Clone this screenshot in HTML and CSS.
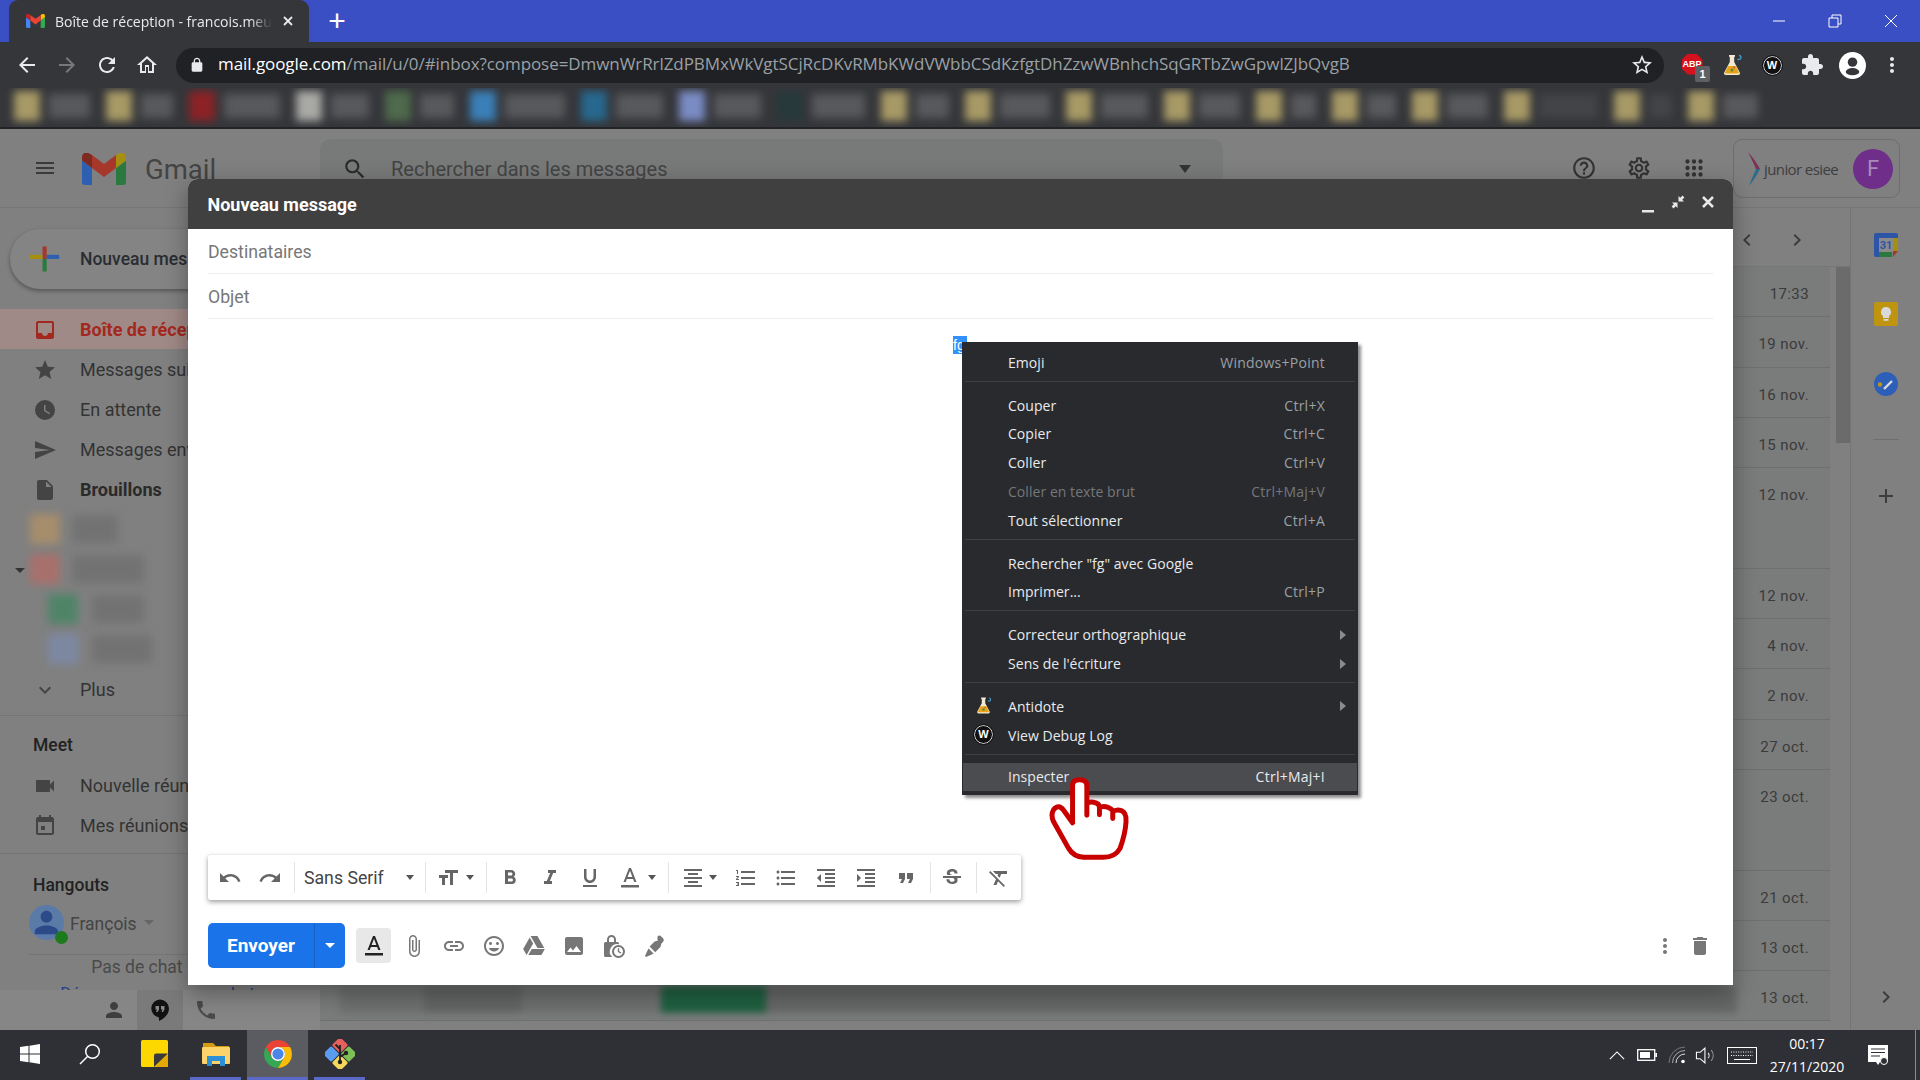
FILE: index.html
```html
<!DOCTYPE html>
<html lang="fr">
<head>
    <meta charset="UTF-8">
    <title>Boîte de réception - Gmail</title>
    <link rel="stylesheet" href="styles.css">
</head>
<body>
    <svg class="sprite" xmlns="http://www.w3.org/2000/svg">
        <symbol id="i-inbox" viewBox="0 0 24 24"><path d="M19 3H5c-1.1 0-2 .9-2 2v14c0 1.1.9 2 2 2h14c1.1 0 2-.9 2-2V5c0-1.1-.9-2-2-2zm0 12h-4c0 1.66-1.35 3-3 3s-3-1.34-3-3H5V5h14v10z"/></symbol>
        <symbol id="i-star" viewBox="0 0 24 24"><path d="M12 17.27L18.18 21l-1.64-7.03L22 9.24l-7.19-.61L12 2 9.19 8.63 2 9.24l5.46 4.73L5.82 21z"/></symbol>
        <symbol id="i-clock" viewBox="0 0 24 24"><path d="M12 2a10 10 0 1 0 0 20 10 10 0 0 0 0-20zm4.2 14.2L11 13V7h1.5v5.2l4.5 2.7z"/></symbol>
        <symbol id="i-send" viewBox="0 0 24 24"><path d="M2.01 21L23 12 2.01 3 2 10l15 2-15 2z"/></symbol>
        <symbol id="i-draft" viewBox="0 0 24 24"><path d="M6 2c-1.1 0-1.99.9-1.99 2L4 20c0 1.1.89 2 1.99 2H18c1.1 0 2-.9 2-2V8l-6-6H6zm7 7V3.5L18.5 9H13z"/></symbol>
        <symbol id="i-video" viewBox="0 0 24 24"><path d="M17 10.5V7c0-.55-.45-1-1-1H4c-.55 0-1 .45-1 1v10c0 .55.45 1 1 1h12c.55 0 1-.45 1-1v-3.5l4 4v-11l-4 4z"/></symbol>
        <symbol id="i-event" viewBox="0 0 24 24"><path d="M12 12H8v4h4v-4zM16 1v2H8V1H6v2H5c-1.11 0-1.99.9-1.99 2L3 19c0 1.1.89 2 2 2h14c1.1 0 2-.9 2-2V5c0-1.1-.9-2-2-2h-1V1h-2zm3 18H5V8h14v11z"/></symbol>
        <symbol id="i-search" viewBox="0 0 24 24"><path d="M15.5 14h-.79l-.28-.27C15.41 12.59 16 11.11 16 9.5 16 5.91 13.09 3 9.5 3S3 5.91 3 9.5 5.91 16 9.5 16c1.61 0 3.09-.59 4.23-1.57l.27.28v.79l5 4.99L20.49 19l-4.99-5zm-6 0C7.01 14 5 11.99 5 9.5S7.01 5 9.5 5 14 7.01 14 9.5 11.99 14 9.5 14z"/></symbol>
        <symbol id="i-help" viewBox="0 0 24 24"><path d="M11 18h2v-2h-2v2zm1-16C6.48 2 2 6.48 2 12s4.48 10 10 10 10-4.48 10-10S17.52 2 12 2zm0 18c-4.41 0-8-3.59-8-8s3.59-8 8-8 8 3.59 8 8-3.59 8-8 8zm0-14c-2.21 0-4 1.79-4 4h2c0-1.1.9-2 2-2s2 .9 2 2c0 2-3 1.75-3 5h2c0-2.25 3-2.5 3-5 0-2.21-1.79-4-4-4z"/></symbol>
        <symbol id="i-gear" viewBox="0 0 24 24"><path d="M19.43 12.98c.04-.32.07-.64.07-.98 0-.34-.03-.66-.07-.98l2.11-1.65c.19-.15.24-.42.12-.64l-2-3.46c-.09-.16-.26-.25-.44-.25-.06 0-.12.01-.17.03l-2.49 1c-.52-.4-1.08-.73-1.69-.98l-.38-2.65C14.46 2.18 14.25 2 14 2h-4c-.25 0-.46.18-.49.42l-.38 2.65c-.61.25-1.17.59-1.69.98l-2.49-1c-.06-.02-.12-.03-.18-.03-.17 0-.34.09-.43.25l-2 3.46c-.13.22-.07.49.12.64l2.11 1.65c-.04.32-.07.65-.07.98 0 .33.03.66.07.98l-2.11 1.65c-.19.15-.24.42-.12.64l2 3.46c.09.16.26.25.44.25.06 0 .12-.01.17-.03l2.49-1c.52.4 1.08.73 1.69.98l.38 2.65c.03.24.24.42.49.42h4c.25 0 .46-.18.49-.42l.38-2.65c.61-.25 1.17-.59 1.69-.98l2.49 1c.06.02.12.03.18.03.17 0 .34-.09.43-.25l2-3.46c.12-.22.07-.49-.12-.64l-2.11-1.65zm-1.98-1.71c.04.31.05.52.05.73 0 .21-.02.43-.05.73l-.14 1.13.89.7 1.08.84-.7 1.21-1.27-.51-1.04-.42-.9.68c-.43.32-.84.56-1.25.73l-1.06.43-.16 1.13-.2 1.35h-1.4l-.19-1.35-.16-1.13-1.06-.43c-.43-.18-.83-.41-1.23-.71l-.91-.7-1.06.43-1.27.51-.7-1.21 1.08-.84.89-.7-.14-1.13c-.03-.31-.05-.54-.05-.74s.02-.43.05-.73l.14-1.13-.89-.7-1.08-.84.7-1.21 1.27.51 1.04.42.9-.68c.43-.32.84-.56 1.25-.73l1.06-.43.16-1.13.2-1.35h1.39l.19 1.35.16 1.13 1.06.43c.43.18.83.41 1.23.71l.91.7 1.06-.43 1.27-.51.7 1.21-1.07.85-.89.7.14 1.13zM12 8c-2.21 0-4 1.79-4 4s1.79 4 4 4 4-1.79 4-4-1.79-4-4-4zm0 6c-1.1 0-2-.9-2-2s.9-2 2-2 2 .9 2 2-.9 2-2 2z"/></symbol>
        <symbol id="i-grid" viewBox="0 0 24 24"><path d="M6 8a2 2 0 1 0 0-4 2 2 0 0 0 0 4zm6 12a2 2 0 1 0 0-4 2 2 0 0 0 0 4zm-6 0a2 2 0 1 0 0-4 2 2 0 0 0 0 4zm0-6a2 2 0 1 0 0-4 2 2 0 0 0 0 4zm6 0a2 2 0 1 0 0-4 2 2 0 0 0 0 4zm4-8a2 2 0 1 0 4 0 2 2 0 0 0-4 0zm-4 2a2 2 0 1 0 0-4 2 2 0 0 0 0 4zm6 6a2 2 0 1 0 0-4 2 2 0 0 0 0 4zm0 6a2 2 0 1 0 0-4 2 2 0 0 0 0 4z"/></symbol>
        <symbol id="i-undo" viewBox="0 0 24 24"><path d="M12.5 8c-2.65 0-5.05.99-6.9 2.6L2 7v9h9l-3.62-3.62c1.39-1.16 3.16-1.88 5.12-1.88 3.54 0 6.55 2.31 7.6 5.5l2.37-.78C21.08 11.03 17.15 8 12.5 8z"/></symbol>
        <symbol id="i-redo" viewBox="0 0 24 24"><path d="M18.4 10.6C16.55 8.99 14.15 8 11.5 8c-4.65 0-8.58 3.03-9.96 7.22L3.9 16c1.05-3.19 4.05-5.5 7.6-5.5 1.95 0 3.73.72 5.12 1.88L13 16h9V7l-3.6 3.6z"/></symbol>
        <symbol id="i-size" viewBox="0 0 24 24"><path d="M9 4v3h5v12h3V7h5V4H9zm-6 8h3v7h3v-7h3V9H3v3z"/></symbol>
        <symbol id="i-bold" viewBox="0 0 24 24"><path d="M15.6 10.79c.97-.67 1.65-1.77 1.65-2.79 0-2.26-1.75-4-4-4H7v14h7.04c2.09 0 3.71-1.7 3.71-3.79 0-1.52-.86-2.82-2.15-3.42zM10 6.5h3c.83 0 1.5.67 1.5 1.5s-.67 1.5-1.5 1.5h-3v-3zm3.5 9H10v-3h3.5c.83 0 1.5.67 1.5 1.5s-.67 1.5-1.5 1.5z"/></symbol>
        <symbol id="i-italic" viewBox="0 0 24 24"><path d="M10 4v3h2.21l-3.42 8H6v3h8v-3h-2.21l3.42-8H18V4z"/></symbol>
        <symbol id="i-underline" viewBox="0 0 24 24"><path d="M12 17c3.31 0 6-2.69 6-6V3h-2.5v8c0 1.93-1.57 3.5-3.5 3.5S8.5 12.93 8.5 11V3H6v8c0 3.31 2.69 6 6 6zm-7 2v2h14v-2H5z"/></symbol>
        <symbol id="i-color" viewBox="0 0 24 24"><path d="M11 2L5.5 16h2.25l1.12-3h6.25l1.12 3h2.25L13 2h-2zm-1.38 9L12 4.67 14.38 11H9.62zM3 19h18v2.5H3z"/></symbol>
        <symbol id="i-align" viewBox="0 0 24 24"><path d="M7 15v2h10v-2H7zm-4 6h18v-2H3v2zm0-8h18v-2H3v2zm4-6v2h10V7H7zM3 3v2h18V3H3z"/></symbol>
        <symbol id="i-numbers" viewBox="0 0 24 24"><path d="M2 17h2v.5H3v1h1v.5H2v1h3v-4H2v1zm1-9h1V4H2v1h1v3zm-1 3h1.8L2 13.1v.9h3v-1H3.2L5 10.9V10H2v1zm5-6v2h14V5H7zm0 14h14v-2H7v2zm0-6h14v-2H7v2z"/></symbol>
        <symbol id="i-bullets" viewBox="0 0 24 24"><path d="M4 10.5c-.83 0-1.5.67-1.5 1.5s.67 1.5 1.5 1.5 1.5-.67 1.5-1.5-.67-1.5-1.5-1.5zm0-6c-.83 0-1.5.67-1.5 1.5S3.17 7.5 4 7.5 5.5 6.83 5.5 6 4.83 4.5 4 4.5zm0 12c-.83 0-1.5.68-1.5 1.5s.68 1.5 1.5 1.5 1.5-.68 1.5-1.5-.67-1.5-1.5-1.5zM7 19h14v-2H7v2zm0-6h14v-2H7v2zm0-8v2h14V5H7z"/></symbol>
        <symbol id="i-outdent" viewBox="0 0 24 24"><path d="M11 17h10v-2H11v2zm-8-5l4 4V8l-4 4zm0 9h18v-2H3v2zM3 3v2h18V3H3zm8 6h10V7H11v2zm0 4h10v-2H11v2z"/></symbol>
        <symbol id="i-indent" viewBox="0 0 24 24"><path d="M3 21h18v-2H3v2zM3 8v8l4-4-4-4zm8 9h10v-2H11v2zM3 3v2h18V3H3zm8 6h10V7H11v2zm0 4h10v-2H11v2z"/></symbol>
        <symbol id="i-quote" viewBox="0 0 24 24"><path d="M6 17h3l2-4V7H5v6h3zm8 0h3l2-4V7h-6v6h3z"/></symbol>
        <symbol id="i-strike" viewBox="0 0 24 24"><path d="M6.85 7.08C6.85 4.37 9.45 3 12.24 3c1.64 0 3 .49 3.9 1.28.77.65 1.46 1.73 1.46 3.24h-3.01c0-.31-.05-.59-.15-.85-.29-.86-1.2-1.28-2.25-1.28-1.86 0-2.34 1.02-2.34 1.7 0 .48.25.88.74 1.21.38.25.77.48 1.41.7H7.39c-.21-.34-.54-.89-.54-1.92zM21 12v-2H3v2h9.62c1.15.45 1.96.75 1.96 1.97 0 1-.81 1.67-2.28 1.67-1.54 0-2.93-.54-2.93-2.51H6.4c0 .55.08 1.13.24 1.58.81 2.29 3.29 3.3 5.67 3.3 2.27 0 5.3-.89 5.3-4.05 0-.3-.01-1.16-.48-1.94H21V12z"/></symbol>
        <symbol id="i-clear" viewBox="0 0 24 24"><path d="M3.27 5L2 6.27l6.97 6.97L6.5 19h3l1.57-3.66L16.73 21 18 19.73 3.55 5.27 3.27 5zM6 5v.18L8.82 8h2.4l-.72 1.68 2.1 2.1L14.21 8H20V5H6z"/></symbol>
        <symbol id="i-attach" viewBox="0 0 24 24"><path d="M16.5 6v11.5c0 2.21-1.79 4-4 4s-4-1.79-4-4V5c0-1.38 1.12-2.5 2.5-2.5s2.5 1.12 2.5 2.5v10.5c0 .55-.45 1-1 1s-1-.45-1-1V6H10v9.5c0 1.38 1.12 2.5 2.5 2.5s2.5-1.12 2.5-2.5V5c0-2.21-1.79-4-4-4S7 2.79 7 5v12.5c0 3.04 2.46 5.5 5.5 5.5s5.5-2.46 5.5-5.5V6h-1.5z"/></symbol>
        <symbol id="i-link" viewBox="0 0 24 24"><path d="M3.9 12c0-1.71 1.39-3.1 3.1-3.1h4V7H7c-2.76 0-5 2.24-5 5s2.24 5 5 5h4v-1.9H7c-1.71 0-3.1-1.39-3.1-3.1zM8 13h8v-2H8v2zm9-6h-4v1.9h4c1.71 0 3.1 1.39 3.1 3.1s-1.39 3.1-3.1 3.1h-4V17h4c2.76 0 5-2.24 5-5s-2.24-5-5-5z"/></symbol>
        <symbol id="i-emoji" viewBox="0 0 24 24"><path d="M11.99 2C6.47 2 2 6.48 2 12s4.47 10 9.99 10C17.52 22 22 17.52 22 12S17.52 2 11.99 2zM12 20c-4.42 0-8-3.58-8-8s3.58-8 8-8 8 3.58 8 8-3.58 8-8 8zm3.5-9c.83 0 1.5-.67 1.5-1.5S16.33 8 15.5 8 14 8.67 14 9.5s.67 1.5 1.5 1.5zm-7 0c.83 0 1.5-.67 1.5-1.5S9.33 8 8.5 8 7 8.67 7 9.5 7.67 11 8.5 11zm3.5 6.5c2.33 0 4.31-1.46 5.11-3.5H6.89c.8 2.04 2.78 3.5 5.11 3.5z"/></symbol>
        <symbol id="i-drive" viewBox="0 0 24 24"><path d="M7.71 3.5L1.15 15l3.43 6 6.55-11.5zM9.73 15L6.3 21h13.12l3.43-6zM22.28 14L15.42 2H8.58v.01L15.43 14z"/></symbol>
        <symbol id="i-photo" viewBox="0 0 24 24"><path d="M21 19V5c0-1.1-.9-2-2-2H5c-1.1 0-2 .9-2 2v14c0 1.1.9 2 2 2h14c1.1 0 2-.9 2-2zM8.5 13.5l2.5 3.01L14.5 12l4.5 6H5l3.5-4.5z"/></symbol>
        <symbol id="i-confidential" viewBox="0 0 24 24"><path d="M3.5 8H5V5.500a4.500 4.500 0 0 1 9 0V8h1.500A1.500 1.500 0 0 1 17 9.500v.7a7.500 7.500 0 0 0-6.800 12.800H3.500A1.500 1.500 0 0 1 2 21.500v-12A1.500 1.500 0 0 1 3.500 8zM7 8h5V5.500a2.500 2.500 0 0 0-5 0V8zm9.500 3a6.500 6.500 0 1 1 0 13 6.500 6.500 0 0 1 0-13zm0 2a4.500 4.500 0 1 0 0 9 4.500 4.500 0 0 0 0-9zm-.7 1.200h1.400v3l2.200 1.300-.7 1.100-2.900-1.700v-3.700z"/></symbol>
        <symbol id="i-pen" viewBox="0 0 24 24"><path d="M15.5 2.500a2.600 2.600 0 0 1 3.700 0l1.800 1.800a2.600 2.600 0 0 1 0 3.700l-1.600 1.600-1 3.400-5.200 5.200-5.600-5.600 5-5 3.400-1-.5-.5zM6.600 14.600l5 5-3 1.400-4.600 2-1-1 2-4.600z"/></symbol>
        <symbol id="i-trash" viewBox="0 0 24 24"><path d="M6 19c0 1.1.9 2 2 2h8c1.1 0 2-.9 2-2V7H6v12zM19 4h-3.5l-1-1h-5l-1 1H5v2h14V4z"/></symbol>
        <symbol id="i-dots" viewBox="0 0 24 24"><path d="M12 8c1.1 0 2-.9 2-2s-.9-2-2-2-2 .9-2 2 .9 2 2 2zm0 2c-1.1 0-2 .9-2 2s.9 2 2 2 2-.9 2-2-.9-2-2-2zm0 6c-1.1 0-2 .9-2 2s.9 2 2 2 2-.9 2-2-.9-2-2-2z"/></symbol>
        <symbol id="i-puzzle" viewBox="0 0 24 24"><path d="M20.5 11H19V7c0-1.1-.9-2-2-2h-4V3.5C13 2.12 11.88 1 10.5 1S8 2.12 8 3.5V5H4c-1.1 0-1.99.9-1.99 2v3.8H3.5c1.49 0 2.7 1.21 2.7 2.7s-1.21 2.7-2.7 2.7H2V20c0 1.1.9 2 2 2h3.8v-1.5c0-1.49 1.21-2.7 2.7-2.7 1.49 0 2.7 1.21 2.7 2.7V22H17c1.1 0 2-.9 2-2v-4h1.5c1.38 0 2.5-1.12 2.5-2.5S21.88 11 20.5 11z"/></symbol>
        <symbol id="i-staro" viewBox="0 0 24 24"><path d="M22 9.24l-7.19-.62L12 2 9.19 8.63 2 9.24l5.46 4.73L5.82 21 12 17.27 18.18 21l-1.63-7.03L22 9.24zM12 15.4l-3.76 2.27 1-4.28-3.32-2.88 4.38-.38L12 6.1l1.71 4.04 4.38.38-3.32 2.88 1 4.28L12 15.4z"/></symbol>
        <symbol id="i-back" viewBox="0 0 24 24"><path d="M20 11H7.83l5.59-5.59L12 4l-8 8 8 8 1.41-1.41L7.83 13H20v-2z"/></symbol>
        <symbol id="i-forward" viewBox="0 0 24 24"><path d="M12 4l-1.41 1.41L16.17 11H4v2h12.17l-5.58 5.59L12 20l8-8z"/></symbol>
        <symbol id="i-reload" viewBox="0 0 24 24"><path d="M17.65 6.35C16.2 4.9 14.21 4 12 4c-4.42 0-7.99 3.58-7.99 8s3.57 8 7.99 8c3.73 0 6.84-2.55 7.73-6h-2.08c-.82 2.33-3.04 4-5.65 4-3.31 0-6-2.69-6-6s2.69-6 6-6c1.66 0 3.14.69 4.22 1.78L13 11h7V4l-2.35 2.35z"/></symbol>
        <symbol id="i-home" viewBox="0 0 24 24"><path d="M12 5.69l5 4.5V18h-3v-6H10v6H7v-7.81l5-4.5M12 3L2 12h3v8h6v-6h2v6h6v-8h3L12 3z"/></symbol>
        <symbol id="i-lock" viewBox="0 0 24 24"><path d="M18 8h-1V6c0-2.76-2.24-5-5-5S7 3.24 7 6v2H6c-1.1 0-2 .9-2 2v10c0 1.1.9 2 2 2h12c1.1 0 2-.9 2-2V10c0-1.1-.9-2-2-2zm-2.9 0H8.9V6c0-1.71 1.39-3.1 3.1-3.1 1.71 0 3.1 1.39 3.1 3.1v2z"/></symbol>
        <symbol id="i-person" viewBox="0 0 24 24"><path d="M12 12c2.21 0 4-1.79 4-4s-1.79-4-4-4-4 1.79-4 4 1.79 4 4 4zm0 2c-2.67 0-8 1.34-8 4v2h16v-2c0-2.66-5.33-4-8-4z"/></symbol>
        <symbol id="i-phone" viewBox="0 0 24 24"><path d="M6.62 10.79c1.44 2.83 3.76 5.14 6.59 6.59l2.2-2.2c.27-.27.67-.36 1.02-.24 1.12.37 2.33.57 3.57.57.55 0 1 .45 1 1V20c0 .55-.45 1-1 1-9.39 0-17-7.61-17-17 0-.55.45-1 1-1h3.5c.55 0 1 .45 1 1 0 1.25.2 2.45.57 3.57.11.35.03.74-.25 1.02l-2.2 2.2z"/></symbol>
        <symbol id="i-flask" viewBox="0 0 24 24"><path fill="#f1ead2" d="M9 2h6v1.500l-.8.4V9l5.600 10.500c.6 1.200-.2 2.500-1.500 2.500H5.700c-1.300 0-2.100-1.300-1.500-2.500L9.800 9V3.900L9 3.500z"/><path fill="#e9a21c" d="M8.200 13h7.600l3 6.200c.3.700-.1 1.300-.8 1.300H6c-.7 0-1.100-.6-.8-1.300z"/><circle cx="12" cy="17" r="1.600" fill="#5c8d2e"/><circle cx="14" cy="14.500" r="1" fill="#d8503a"/><path fill="none" stroke="#3da0d8" stroke-width="1.300" d="M19 2.500a2 2 0 1 1-1.500 3.300"/></symbol>
        <symbol id="i-gmail" viewBox="0 0 44 32"><path fill="var(--m-blue)" d="M3 32h7V15L0 7.5V29a3 3 0 0 0 3 3z"/><path fill="var(--m-green)" d="M34 32h7a3 3 0 0 0 3-3V7.5L34 15z"/><path fill="var(--m-yellow)" d="M34 2v13l10-7.5V4c0-3.7-4.2-5.8-7.2-3.6z"/><path fill="var(--m-red)" d="M10 15V2l12 9 12-9v13L22 24z"/><path fill="var(--m-dark)" d="M0 4v3.5L10 15V2L7.2.4C4.2-1.8 0 .3 0 4z"/></symbol>
    </svg>

    <!-- chrome -->
    <div class="tabstrip">
        <div class="tab">
            <svg class="tab-favicon"><use href="#i-gmail"/></svg>
            <span class="tab-title">Boîte de réception - francois.meu</span>
            <svg class="tab-close" viewBox="0 0 12 12"><path d="M2 2l8 8M10 2l-8 8"/></svg>
        </div>
        <div class="tab-new">+</div>
        <div class="window-btns">
            <svg viewBox="0 0 14 14"><path d="M1 7h12"/></svg>
            <svg viewBox="0 0 14 14"><path d="M1 4h9v9H1zM4 4V1h9v9h-3"/></svg>
            <svg viewBox="0 0 14 14"><path d="M1 1l12 12M13 1L1 13"/></svg>
        </div>
    </div>

    <div class="toolbar">
        <span class="tool"><svg class="ic"><use href="#i-back"/></svg></span>
        <span class="tool dim"><svg class="ic"><use href="#i-forward"/></svg></span>
        <span class="tool"><svg class="ic"><use href="#i-reload"/></svg></span>
        <span class="tool"><svg class="ic"><use href="#i-home"/></svg></span>
        <div class="omnibox">
            <svg class="omni-lock"><use href="#i-lock"/></svg>
            <span class="url"><b>mail.google.com</b>/mail/u/0/#inbox?compose=DmwnWrRrlZdPBMxWkVgtSCjRcDKvRMbKWdVWbbCSdKzfgtDhZzwWBnhchSqGRTbZwGpwlZJbQvgB</span>
            <svg class="ic omni-star"><use href="#i-staro"/></svg>
        </div>
        <div class="extensions">
            <span class="tool">
                <span class="abp">ABP</span><span class="abp-badge">1</span>
            </span>
            <span class="tool"><svg class="ic"><use href="#i-flask"/></svg></span>
            <span class="tool"><span class="wbadge">W</span></span>
            <span class="tool"><svg class="ic"><use href="#i-puzzle"/></svg></span>
            <span class="tool">
                <svg class="ic account" viewBox="0 0 24 24"><circle cx="12" cy="12" r="12" fill="#fff"/><circle cx="12" cy="9" r="4.200" fill="#35363a"/><ellipse cx="12" cy="17.500" rx="6" ry="3.200" fill="#35363a"/></svg>
            </span>
            <span class="tool"><svg class="ic"><use href="#i-dots"/></svg></span>
        </div>
    </div>

    <div class="bookmarks">
        <div class="bookmarks-inner">
            <span class="bm bm-76"><i class="bm-icon khaki"></i><i class="bm-label"></i></span>
            <span class="bm bm-67"><i class="bm-icon khaki"></i><i class="bm-label"></i></span>
            <span class="bm bm-91"><i class="bm-icon red"></i><i class="bm-label"></i></span>
            <span class="bm bm-73"><i class="bm-icon silver"></i><i class="bm-label"></i></span>
            <span class="bm bm-69"><i class="bm-icon green"></i><i class="bm-label"></i></span>
            <span class="bm bm-95"><i class="bm-icon blue"></i><i class="bm-label"></i></span>
            <span class="bm bm-82"><i class="bm-icon teal"></i><i class="bm-label"></i></span>
            <span class="bm bm-82"><i class="bm-icon peri"></i><i class="bm-label"></i></span>
            <span class="bm bm-88"><i class="bm-icon night"></i><i class="bm-label"></i></span>
            <span class="bm bm-68"><i class="bm-icon khaki"></i><i class="bm-label"></i></span>
            <span class="bm bm-85"><i class="bm-icon khaki"></i><i class="bm-label"></i></span>
            <span class="bm bm-82"><i class="bm-icon khaki"></i><i class="bm-label"></i></span>
            <span class="bm bm-76"><i class="bm-icon khaki"></i><i class="bm-label"></i></span>
            <span class="bm bm-60"><i class="bm-icon khaki"></i><i class="bm-label"></i></span>
            <span class="bm bm-64"><i class="bm-icon khaki"></i><i class="bm-label"></i></span>
            <span class="bm bm-76"><i class="bm-icon khaki"></i><i class="bm-label"></i></span>
            <span class="bm bm-94"><i class="bm-icon khaki"></i><i class="bm-label faint"></i></span>
            <span class="bm bm-58"><i class="bm-icon khaki"></i><i class="bm-label faint"></i></span>
            <span class="bm bm-70"><i class="bm-icon khaki"></i><i class="bm-label"></i></span>
        </div>
    </div>

    <!-- gmail, dimmed behind the compose window -->
    <div class="gmail">
        <header class="gm-header">
            <svg class="ic gm-menu" viewBox="0 0 24 24"><path d="M3 18h18v-2H3v2zm0-5h18v-2H3v2zm0-7v2h18V6H3z"/></svg>
            <svg class="gm-logo"><use href="#i-gmail"/></svg>
            <span class="gm-word">Gmail</span>
            <div class="gm-search">
                <svg class="search-icon"><use href="#i-search"/></svg>
                <span class="search-text">Rechercher dans les messages</span>
                <i class="search-caret"></i>
            </div>
            <div class="gm-actions">
                <svg><use href="#i-help"/></svg>
                <svg><use href="#i-gear"/></svg>
                <svg><use href="#i-grid"/></svg>
            </div>
            <div class="gm-account">
                <svg class="junior-mark" viewBox="0 0 14 34"><path fill="#7d2f55" d="M1 0c5 6 9 11 12 17H9C7 12 4 6 1 0z"/><path fill="#2e6a8a" d="M13 17C10 23 6 29 2 34c2-6 5-12 7-17z"/></svg>
                <span class="junior-text">junior esiee</span>
                <span class="avatar">F</span>
            </div>
        </header>

        <div class="gm-main">
            <aside class="gm-side">
                <div class="side-scroll">
                    <div class="new-mail">
                        <svg class="new-plus" viewBox="0 0 36 36"><path fill="#a5372b" d="M15 3h5v15h-5z"/><path fill="#2f5fb0" d="M20 13h15v5H20z"/><path fill="#2a7a40" d="M15 18h5v15h-5z"/><path fill="#a68f10" d="M0 13h15v5H0z"/></svg>
                        <span>Nouveau message</span>
                    </div>
                    <div class="nav-row active"><svg class="ic"><use href="#i-inbox"/></svg><span>Boîte de réception</span></div>
                    <div class="nav-row"><svg class="ic"><use href="#i-star"/></svg><span>Messages suivis</span></div>
                    <div class="nav-row"><svg class="ic"><use href="#i-clock"/></svg><span>En attente</span></div>
                    <div class="nav-row"><svg class="ic"><use href="#i-send"/></svg><span>Messages envoyés</span></div>
                    <div class="nav-row strong"><svg class="ic"><use href="#i-draft"/></svg><span>Brouillons</span></div>
                    <div class="blur-row"><i class="blur-icon orange"></i><i class="blur-text bt-46"></i></div>
                    <div class="blur-row"><i class="side-caret"></i><i class="blur-icon rose"></i><i class="blur-text bt-68"></i></div>
                    <div class="blur-row sub"><i class="blur-icon mint"></i><i class="blur-text bt-52"></i></div>
                    <div class="blur-row sub"><i class="blur-icon sky"></i><i class="blur-text bt-60"></i></div>
                    <div class="nav-row plus">
                        <svg class="ic" viewBox="0 0 24 24"><path d="M7.4 8.6L12 13.2l4.6-4.6L18 10l-6 6-6-6z"/></svg><span>Plus</span>
                    </div>
                    <section class="side-sec">
                        <h4>Meet</h4>
                        <div class="nav-row"><svg class="ic"><use href="#i-video"/></svg><span>Nouvelle réunion</span></div>
                        <div class="nav-row"><svg class="ic"><use href="#i-event"/></svg><span>Mes réunions</span></div>
                    </section>
                    <section class="side-sec hangouts">
                        <h4>Hangouts</h4>
                        <div class="me">
                            <span class="me-pic"><svg viewBox="0 0 24 24"><use href="#i-person"/></svg><i class="me-dot"></i></span>
                            <span class="me-name">François</span><i class="me-caret"></i>
                        </div>
                        <div class="no-chat">
                            <p>Pas de chat récent</p>
                            <p class="start-chat">Démarrer un nouveau chat</p>
                        </div>
                    </section>
                </div>
                <div class="side-tabs">
                    <span class="side-tab"><svg class="ic"><use href="#i-person"/></svg></span>
                    <span class="side-tab on">
                        <svg class="ic" viewBox="0 0 24 24"><path fill="#111" d="M12 1.500a9 9 0 0 0-1 17.900V23c4.500-2.100 10-6.300 10-12.500a9 9 0 0 0-9-9z"/><path fill="#888" d="M7.500 8h3.500v3.500L9.500 14H8l1-2.500H7.500zM13 8h3.500v3.500L15 14h-1.500l1-2.500H13z"/></svg>
                    </span>
                    <span class="side-tab"><svg class="ic"><use href="#i-phone"/></svg></span>
                </div>
            </aside>

            <div class="gm-list">
                <div class="list-bar">
                    <svg class="ic" viewBox="0 0 24 24"><path d="M15.4 7.4L14 6l-6 6 6 6 1.4-1.4L10.8 12z"/></svg>
                    <svg class="ic" viewBox="0 0 24 24"><path d="M10 6L8.600 7.400l4.600 4.600-4.600 4.600L10 18l6-6z"/></svg>
                </div>
                <div class="list-scroll">
                    <div class="rows">
                        <div class="row"><span>17:33</span></div>
                        <div class="row"><span>19 nov.</span></div>
                        <div class="row"><span>16 nov.</span></div>
                        <div class="row"><span>15 nov.</span></div>
                        <div class="row tall"><span>12 nov.</span></div>
                        <div class="row"><span>12 nov.</span></div>
                        <div class="row"><span>4 nov.</span></div>
                        <div class="row"><span>2 nov.</span></div>
                        <div class="row"><span>27 oct.</span></div>
                        <div class="row tall"><span>23 oct.</span></div>
                        <div class="row"><span>21 oct.</span></div>
                        <div class="row"><span>13 oct.</span></div>
                        <div class="row"><i class="row-smear"></i><span>13 oct.</span></div>
                    </div>
                    <div class="scrollbar"><i></i></div>
                </div>
            </div>

            <aside class="gm-addons">
                <svg class="addon" viewBox="0 0 24 24"><path fill="#2d55a6" d="M5 0h14v5H5z"/><path fill="#a68f10" d="M19 5h5v13h-5z"/><path fill="#2a7a40" d="M5 19h13v5H5z"/><path fill="#2d55a6" d="M2 0h3v19H0V2a2 2 0 0 1 2-2zM0 19h5v5H2a2 2 0 0 1-2-2z"/><path fill="#a5372b" d="M19 18h5l-5 6z"/><path fill="#2d55a6" d="M19 0h3a2 2 0 0 1 2 2v3h-5z"/><path fill="#8a8a8a" d="M5 5h14v14H5z"/><text x="12" y="16" class="addon-31">31</text></svg>
                <svg class="addon" viewBox="0 0 24 24"><rect width="24" height="24" rx="2" fill="#bf9410"/><path fill="#d9d9d9" d="M12 5a5 5 0 0 0-3 9v2h6v-2a5 5 0 0 0-3-9zM9.500 17h5v1.800h-5z"/></svg>
                <svg class="addon" viewBox="0 0 24 24"><circle cx="12" cy="12" r="12" fill="#2d5fb8"/><circle cx="6" cy="12.500" r="2.200" fill="#bf9410"/><path fill="none" stroke="#d9d9d9" stroke-width="2.400" d="M10 17l8-8"/></svg>
                <i class="addon-line"></i>
                <svg class="ic addon-plus" viewBox="0 0 24 24"><path d="M19 13h-6v6h-2v-6H5v-2h6V5h2v6h6v2z"/></svg>
                <svg class="ic addon-next" viewBox="0 0 24 24"><path d="M10 6L8.600 7.400l4.600 4.600-4.600 4.600L10 18l6-6z"/></svg>
            </aside>
        </div>

        <!-- compose window -->
        <div class="compose">
            <div class="compose-head">
                <span>Nouveau message</span>
                <div class="compose-ctrl">
                    <svg viewBox="0 0 14 14"><path d="M1 11h12v2.500H1z"/></svg>
                    <svg viewBox="0 0 14 14"><path d="M7.500 6.500V1l1.800 1.800L11.500.6l1.900 1.900-2.200 2.200 1.800 1.800zM6.500 7.500V13l-1.800-1.800-2.200 2.200L.6 11.500l2.200-2.200L1 7.500z"/></svg>
                    <svg viewBox="0 0 14 14"><path class="stroked" d="M2 2l10 10M12 2L2 12"/></svg>
                </div>
            </div>
            <div class="field">Destinataires</div>
            <div class="field">Objet</div>
            <div class="compose-body"><span class="selected">fg</span></div>

            <div class="fmt">
                <span class="fmt-btn"><svg class="ic"><use href="#i-undo"/></svg></span>
                <span class="fmt-btn"><svg class="ic"><use href="#i-redo"/></svg></span>
                <i class="fmt-sep first"></i>
                <span class="fmt-font">Sans Serif<i class="caret"></i></span>
                <i class="fmt-sep"></i>
                <span class="fmt-drop size"><svg class="ic"><use href="#i-size"/></svg><i class="caret"></i></span>
                <i class="fmt-sep after-size"></i>
                <span class="fmt-btn"><svg class="ic"><use href="#i-bold"/></svg></span>
                <span class="fmt-btn"><svg class="ic"><use href="#i-italic"/></svg></span>
                <span class="fmt-btn"><svg class="ic"><use href="#i-underline"/></svg></span>
                <span class="fmt-drop color"><svg class="ic"><use href="#i-color"/></svg><i class="caret"></i></span>
                <i class="fmt-sep"></i>
                <span class="fmt-drop align"><svg class="ic"><use href="#i-align"/></svg><i class="caret"></i></span>
                <span class="fmt-btn"><svg class="ic"><use href="#i-numbers"/></svg></span>
                <span class="fmt-btn"><svg class="ic"><use href="#i-bullets"/></svg></span>
                <span class="fmt-btn"><svg class="ic"><use href="#i-outdent"/></svg></span>
                <span class="fmt-btn"><svg class="ic"><use href="#i-indent"/></svg></span>
                <span class="fmt-btn"><svg class="ic"><use href="#i-quote"/></svg></span>
                <i class="fmt-sep first"></i>
                <span class="fmt-btn strike"><svg class="ic"><use href="#i-strike"/></svg></span>
                <i class="fmt-sep"></i>
                <span class="fmt-btn clear"><svg class="ic"><use href="#i-clear"/></svg></span>
            </div>

            <div class="compose-foot">
                <div class="send">
                    <span class="send-main">Envoyer</span>
                    <span class="send-more"><i></i></span>
                </div>
                <span class="fmt-toggle"><svg class="ic"><use href="#i-color"/></svg></span>
                <span class="foot-btn"><svg class="ic"><use href="#i-attach"/></svg></span>
                <span class="foot-btn"><svg class="ic"><use href="#i-link"/></svg></span>
                <span class="foot-btn"><svg class="ic"><use href="#i-emoji"/></svg></span>
                <span class="foot-btn"><svg class="ic"><use href="#i-drive"/></svg></span>
                <span class="foot-btn"><svg class="ic"><use href="#i-photo"/></svg></span>
                <span class="foot-btn"><svg class="ic"><use href="#i-confidential"/></svg></span>
                <span class="foot-btn"><svg class="ic"><use href="#i-pen"/></svg></span>
                <span class="foot-btn right"><svg class="ic"><use href="#i-dots"/></svg></span>
                <span class="foot-btn end"><svg class="ic"><use href="#i-trash"/></svg></span>
            </div>
        </div>

        <!-- context menu -->
        <div class="ctx">
            <div class="ctx-item"><span>Emoji</span><kbd>Windows+Point</kbd></div>
            <div class="ctx-sep"></div>
            <div class="ctx-item"><span>Couper</span><kbd>Ctrl+X</kbd></div>
            <div class="ctx-item"><span>Copier</span><kbd>Ctrl+C</kbd></div>
            <div class="ctx-item"><span>Coller</span><kbd>Ctrl+V</kbd></div>
            <div class="ctx-item off"><span>Coller en texte brut</span><kbd>Ctrl+Maj+V</kbd></div>
            <div class="ctx-item"><span>Tout sélectionner</span><kbd>Ctrl+A</kbd></div>
            <div class="ctx-sep"></div>
            <div class="ctx-item"><span>Rechercher "fg" avec Google</span></div>
            <div class="ctx-item"><span>Imprimer...</span><kbd>Ctrl+P</kbd></div>
            <div class="ctx-sep"></div>
            <div class="ctx-item"><span>Correcteur orthographique</span><i class="ctx-arrow"></i></div>
            <div class="ctx-item"><span>Sens de l'écriture</span><i class="ctx-arrow"></i></div>
            <div class="ctx-sep"></div>
            <div class="ctx-item"><svg class="ctx-icon"><use href="#i-flask"/></svg><span>Antidote</span><i class="ctx-arrow"></i></div>
            <div class="ctx-item"><span class="ctx-icon wbadge">W</span><span>View Debug Log</span></div>
            <div class="ctx-sep tight"></div>
            <div class="ctx-item hover"><span>Inspecter</span><kbd>Ctrl+Maj+I</kbd></div>
        </div>

        <!-- pointer drawn on top of the capture -->
        <svg class="hand" viewBox="320 525 250 260">
            <path fill="#fff" d="M397 665V555q0-17 21-17t22 17v60q2-12 20-9t18 16q12-7 27 0t13 13q12-10 27-3t13 33q-2 35-18 80-15 27-50 27h-60q-30-2-45-27l-45-80q-10-20 0-37 15-18 30 2l27 38z"/>
            <path fill="none" stroke="#c80000" stroke-width="15" stroke-linejoin="round" stroke-linecap="round" d="M397 665V555q0-17 21-17t22 17v90M440 615q2-12 20-9t18 16v22M478 622q12-7 27 0t13 13v20M518 635q12-10 27-3t13 33q-2 35-18 80-15 27-50 27h-60q-30-2-45-27l-45-80q-10-20 0-37 15-18 30 2l27 38"/>
        </svg>
    </div>

    <!-- windows taskbar -->
    <div class="taskbar">
        <span class="task win">
            <svg viewBox="0 0 20 20"><path fill="#fff" d="M0 3l8.500-1.200v7.700H0zM9.500 1.700L20 0v9.500H9.500zM0 10.500h8.500v7.700L0 17zM9.500 10.500H20V20L9.500 18.300z"/></svg>
        </span>
        <span class="task find">
            <svg viewBox="0 0 22 22" fill="none" stroke="#fff" stroke-width="1.500"><circle cx="13.500" cy="8.500" r="6.800"/><path d="M8.500 13.500L1 21"/></svg>
        </span>
        <span class="task sticky">
            <svg viewBox="0 0 27 27"><rect width="27" height="27" rx="1.500" fill="#fcd700"/><path fill="#3a3a3a" d="M13 27V15.500a2 2 0 0 1 2-2h12z"/><path fill="#e5a800" d="M27 13.500V27H14z"/></svg>
        </span>
        <span class="task folder open">
            <svg viewBox="0 0 28 24"><path fill="#d49a12" d="M1 1h10l3 3h13v8H1z"/><path fill="#fcd36a" d="M1 5h26a1 1 0 0 1 1 1v15a1 1 0 0 1-1 1H1a1 1 0 0 1-1-1V6a1 1 0 0 1 1-1z"/><path fill="#2d8fd5" d="M5 14h18v10h-5v-5h-8v5H5z"/></svg>
        </span>
        <span class="task chrome open active">
            <svg viewBox="4 4 40 40"><path fill="#ea4335" d="M24 4a20 20 0 0 1 17.320 10H24a10 10 0 0 0-8.660 15L6.680 14A20 20 0 0 1 24 4z"/><path fill="#34a853" d="M6.680 14l8.660 15a10 10 0 0 0 17.320 0L24 44A20 20 0 0 1 6.680 14z"/><path fill="#fbbc04" d="M41.320 14A20 20 0 0 1 24 44l8.660-15A10 10 0 0 0 24 14z"/><circle cx="24" cy="24" r="10" fill="#fff"/><circle cx="24" cy="24" r="8" fill="#4a86e8"/></svg>
        </span>
        <span class="task fork open">
            <svg viewBox="0 0 30 30"><g transform="rotate(45 15 15)"><rect x="3" y="3" width="11.500" height="11.500" rx="1.500" fill="#e8605c"/><rect x="15.500" y="3" width="11.500" height="11.500" rx="1.500" fill="#7dc05a"/><rect x="15.500" y="15.500" width="11.500" height="11.500" rx="1.500" fill="#f5d95a"/><rect x="3" y="15.500" width="11.500" height="11.500" rx="1.500" fill="#5a9cf0"/></g><path fill="none" stroke="#222" stroke-width="1.800" d="M15 6v17M10.500 5.500L15 10M21 14l-6 4"/><circle cx="15" cy="23" r="2.200" fill="#222"/><circle cx="21" cy="14" r="2.200" fill="#222"/></svg>
        </span>
        <div class="tray">
            <span class="tray-item w30"><svg viewBox="0 0 18 10" class="tray-chevron"><path d="M1 9l8-8 8 8"/></svg></span>
            <span class="tray-item w30"><svg viewBox="0 0 20 12" class="tray-battery"><rect x=".7" y=".7" width="17" height="10.600" fill="none" stroke="#fff" stroke-width="1.300"/><rect x="3" y="3" width="10" height="6" fill="#fff"/><rect x="18.300" y="4" width="1.700" height="4" fill="#fff"/></svg></span>
            <span class="tray-item w30"><svg viewBox="0 0 18 18" class="tray-wifi"><path d="M1 17a16 16 0 0 1 16-16" stroke="#777"/><path d="M4.500 17A12.500 12.500 0 0 1 17 4.500" stroke="#aaa"/><path d="M8 17a9 9 0 0 1 9-9" stroke="#ddd"/><circle cx="15" cy="15.500" r="1.800" fill="#fff" stroke="none"/></svg></span>
            <span class="tray-item w28"><svg viewBox="0 0 20 16" class="tray-vol"><path d="M1 5h3.500L9 1v14l-4.500-4H1z" stroke="#fff"/><path d="M12 5.500a4 4 0 0 1 0 5" stroke="#ddd"/><path d="M15 3a8 8 0 0 1 0 10" stroke="#999"/></svg></span>
            <span class="tray-item w44"><svg viewBox="0 0 30 17" class="tray-kbd"><rect x=".5" y=".5" width="29" height="16" fill="none" stroke="#fff"/><path stroke="#fff" stroke-dasharray="1 1.400" d="M4 5h22M4 8.500h22"/><path stroke="#fff" d="M7 12.500h16"/></svg></span>
            <span class="clock"><span>00:17</span><span>27/11/2020</span></span>
            <span class="tray-item w56"><svg viewBox="0 0 20 20" class="tray-note"><path fill="#fff" d="M0 0h20v17H12l-2 3-2-3H0z"/><path stroke="#2e3036" stroke-width="1.200" d="M3 4h14M3 7.500h14M3 11h9"/><circle cx="16" cy="16" r="3.500" fill="#2e3036" stroke="#fff"/></svg></span>
            <span class="show-desktop"></span>
        </div>
    </div>
</body>
</html>
```

FILE: styles.css
```css
* {
    box-sizing: border-box;
}

html,
body {
    margin: 0;
    height: 100%;
}

body {
    width: 1920px;
    height: 1080px;
    overflow: hidden;
    display: flex;
    flex-direction: column;
    font-family: Roboto, sans-serif;
    background: #808080;
    --ui: "Open Sans", "Noto Sans", sans-serif;
    --m-blue: #4285f4;
    --m-green: #34a853;
    --m-yellow: #fbbc04;
    --m-red: #ea4335;
    --m-dark: #c5221f;
}

.sprite {
    display: none;
}

svg {
    display: block;
    fill: currentColor;
}

.ic {
    width: 24px;
    height: 24px;
    flex: none;
}

/* chrome */
.tabstrip {
    height: 42px;
    flex: none;
    display: flex;
    align-items: flex-end;
    background: #3a4fc4;
}

.tab {
    width: 300px;
    height: 42px;
    margin-left: 9px;
    padding: 0 14px 0 17px;
    display: flex;
    align-items: center;
    background: #35363a;
    border-radius: 9px 9px 0 0;
    color: #e8eaed;
}

.tab-favicon {
    width: 19px;
    height: 14px;
    flex: none;
}

.tab-title {
    width: 217px;
    margin-left: 10px;
    overflow: hidden;
    white-space: nowrap;
    font: 14px var(--ui);
    -webkit-mask-image: linear-gradient(90deg, #000 90%, transparent);
    mask-image: linear-gradient(90deg, #000 90%, transparent);
}

.tab-close {
    width: 12px;
    height: 12px;
    margin-left: 10px;
    fill: none;
    stroke: #e8eaed;
    stroke-width: 1.8;
}

.tab-new {
    width: 56px;
    height: 42px;
    text-align: center;
    color: #fff;
    font: 30px/42px "Liberation Sans", sans-serif;
}

.window-btns {
    margin-left: auto;
    height: 42px;
    display: flex;
    align-items: center;
}

.window-btns svg {
    width: 14px;
    height: 14px;
    margin: 0 21px;
    fill: none;
    stroke: #fff;
    stroke-width: 1;
}

.window-btns svg:last-child {
    margin-right: 22px;
}

.toolbar {
    height: 46px;
    flex: none;
    display: flex;
    align-items: center;
    padding-left: 7px;
    background: #35363a;
    color: #e8eaed;
}

.tool {
    position: relative;
    width: 40px;
    height: 40px;
    flex: none;
    display: flex;
    align-items: center;
    justify-content: center;
}

.tool.dim {
    color: #77787b;
}

.omnibox {
    width: 1488px;
    height: 35px;
    margin-left: 9px;
    padding-left: 13px;
    display: flex;
    align-items: center;
    background: #202124;
    border-radius: 18px;
}

.omni-lock {
    width: 16px;
    height: 16px;
    flex: none;
}

.url {
    margin-left: 13px;
    padding-bottom: 3px;
    font: 17px var(--ui);
    letter-spacing: -0.07px;
    color: #9aa0a6;
    white-space: nowrap;
}

.url b {
    font-weight: 400;
    color: #fff;
}

.omni-star {
    margin-left: auto;
    margin-right: 10px;
}

.extensions {
    display: flex;
    margin-left: 8px;
}

.abp {
    width: 21px;
    height: 21px;
    margin-bottom: 2px;
    background: #d4111d;
    clip-path: polygon(30% 0, 70% 0, 100% 30%, 100% 70%, 70% 100%, 30% 100%, 0 70%, 0 30%);
    color: #fff;
    text-align: center;
    font: bold 9px/21px "Liberation Sans", sans-serif;
}

.abp-badge {
    position: absolute;
    left: 23px;
    top: 21px;
    width: 15px;
    height: 16px;
    background: #5f6063;
    border-radius: 2px;
    color: #fff;
    text-align: center;
    font: bold 11px/16px "Liberation Sans", sans-serif;
}

.account {
    width: 27px;
    height: 27px;
}

.wbadge {
    display: block;
    width: 19px;
    height: 19px;
    background: #111;
    border: 1.5px solid #ddd;
    outline: 1px solid #111;
    border-radius: 50%;
    color: #fff;
    text-align: center;
    font: bold 11px/16px "Liberation Sans", sans-serif;
}

.bookmarks {
    height: 41px;
    flex: none;
    overflow: hidden;
    background: #35363a;
    border-bottom: 2px solid #222326;
}

.bookmarks-inner {
    height: 36px;
    display: flex;
    align-items: center;
    gap: 16px;
    padding-left: 14px;
    filter: blur(4px);
}

.bm {
    height: 30px;
    flex: none;
    display: flex;
    gap: 9px;
}

.bm-58 { width: 58px; }
.bm-60 { width: 60px; }
.bm-64 { width: 64px; }
.bm-67 { width: 67px; }
.bm-68 { width: 68px; }
.bm-69 { width: 69px; }
.bm-70 { width: 70px; }
.bm-73 { width: 73px; }
.bm-76 { width: 76px; }
.bm-82 { width: 82px; }
.bm-85 { width: 85px; }
.bm-88 { width: 88px; }
.bm-91 { width: 91px; }
.bm-94 { width: 94px; }
.bm-95 { width: 95px; }

.bm-icon {
    width: 26px;
    flex: none;
}

.bm-label {
    flex: 1;
    margin: 3px 0;
    background: #58595c;
}

.bm-label.faint {
    background: #434448;
}

.khaki { background: #a89a66; }
.red { background: #8c2226; }
.silver { background: #a9a9a6; }
.green { background: #4f6a4c; }
.blue { background: #3a80b8; }
.teal { background: #27688f; }
.peri { background: #7a8cc4; }
.night { background: #27393b; }

/* gmail behind */
.gmail {
    position: relative;
    height: 901px;
    flex: none;
    background: #808080;
    color: #333;
}

.gm-header {
    height: 79px;
    display: flex;
    align-items: flex-start;
    border-bottom: 1px solid #777;
    --m-blue: #2f5fb0;
    --m-green: #2a7a40;
    --m-yellow: #a68f10;
    --m-red: #a5372b;
    --m-dark: #7e2a20;
}

.gm-menu {
    margin: 27px 0 0 33px;
    color: #3a3a3a;
}

.gm-logo {
    width: 44px;
    height: 32px;
    margin: 24px 0 0 25px;
    flex: none;
}

.gm-word {
    width: 175px;
    margin: 20px 0 0 19px;
    font-size: 27.5px;
    line-height: 42px;
    color: #444;
}

.gm-search {
    width: 903px;
    height: 60px;
    margin-top: 10px;
    display: flex;
    align-items: center;
    padding: 0 32px 0 22px;
    background: #787a7a;
    border-radius: 10px;
}

.search-icon {
    width: 26px;
    height: 26px;
    flex: none;
    color: #2c2c2c;
}

.search-text {
    margin-left: 23px;
    font-size: 20px;
    color: #444;
}

.search-caret {
    margin-left: auto;
    border: 6px solid transparent;
    border-top: 8px solid #333;
    border-bottom: 0;
}

.gm-actions {
    margin: 26px 0 0 348px;
    display: flex;
    gap: 29px;
    color: #333;
}

.gm-actions svg {
    width: 26px;
    height: 26px;
    flex: none;
}

.gm-account {
    width: 167px;
    height: 59px;
    margin: 10px 20px 0 auto;
    display: flex;
    align-items: center;
    padding-left: 13px;
    border: 1px solid #6e6e6e;
    border-radius: 9px;
}

.junior-mark {
    width: 14px;
    height: 34px;
    flex: none;
}

.junior-text {
    margin-left: 3px;
    font: 15px var(--ui);
    letter-spacing: -0.6px;
    color: #3e3e3e;
}

.avatar {
    width: 40px;
    height: 40px;
    margin-left: auto;
    margin-right: 6px;
    background: #6e2e8a;
    border-radius: 50%;
    color: #a98abb;
    text-align: center;
    font-size: 22px;
    line-height: 40px;
}

.gm-main {
    height: 822px;
    display: flex;
}

.gm-side {
    width: 320px;
    flex: none;
    display: flex;
    flex-direction: column;
    color: #333;
}

.side-scroll {
    flex: 1;
    overflow: hidden;
}

.new-mail {
    width: 300px;
    height: 60px;
    margin: 21px 0 20px 10px;
    padding-left: 20px;
    display: flex;
    align-items: center;
    background: #848484;
    border-radius: 30px;
    box-shadow: 0 2px 4px rgba(0, 0, 0, .35);
    font-size: 17.5px;
    font-weight: 500;
    color: #2a2d33;
}

.new-plus {
    width: 30px;
    height: 30px;
    flex: none;
    margin-right: 20px;
}

.nav-row {
    height: 40px;
    display: flex;
    align-items: center;
    padding: 1px 0 0 33px;
    font-size: 18px;
    color: #333;
    white-space: nowrap;
}

.nav-row .ic {
    margin-right: 23px;
    color: #444;
}

.nav-row.active {
    background: #a08a88;
    font-weight: 700;
    color: #a3281e;
}

.nav-row.active .ic {
    color: #a3281e;
}

.nav-row.strong {
    font-weight: 700;
    color: #2a2a2a;
}

.blur-row {
    position: relative;
    height: 40px;
    display: flex;
    align-items: center;
    padding-left: 30px;
    gap: 12px;
}

.blur-row.sub {
    padding-left: 48px;
    gap: 14px;
}

.blur-icon {
    width: 30px;
    height: 30px;
    filter: blur(4px);
}

.blur-text {
    height: 28px;
    background: #727272;
    filter: blur(5px);
}

.bt-46 { width: 46px; }
.bt-52 { width: 52px; }
.bt-60 { width: 60px; }
.bt-68 { width: 72px; }

.orange { background: #a68d6c; }
.rose { background: #a8706c; }
.mint { background: #4f8468; }
.sky { background: #7c88a2; }

.side-caret {
    position: absolute;
    left: 15px;
    top: 19px;
    border: 5px solid transparent;
    border-top: 5px solid #333;
    border-bottom: 0;
}

.side-sec {
    margin-top: 6px;
    border-top: 1px solid #757575;
}

.side-sec h4 {
    margin: 17px 0 8px 33px;
    height: 24px;
    font-size: 17.5px;
    line-height: 24px;
    font-weight: 500;
    color: #222;
}

.side-sec.hangouts {
    margin-top: 8px;
}

.hangouts h4 {
    margin: 19px 0 8px 33px;
}

.me {
    height: 35px;
    display: flex;
    align-items: center;
    margin-left: 29px;
}

.me-pic {
    position: relative;
    width: 35px;
    height: 35px;
    background: #5a7aa8;
    border-radius: 50%;
    color: #2d4a88;
}

.me-pic svg {
    width: 35px;
    height: 35px;
}

.me-dot {
    position: absolute;
    left: 26px;
    top: 26px;
    width: 13px;
    height: 13px;
    background: #1d7a1d;
    border-radius: 50%;
}

.me-name {
    margin-left: 6px;
    padding-top: 2px;
    font-size: 17.5px;
    color: #444;
}

.me-caret {
    margin-left: 7px;
    border: 5px solid transparent;
    border-top: 5px solid #666;
    border-bottom: 0;
}

.no-chat {
    margin: 14px 0 0 29px;
    width: 257px;
    padding-left: 12px;
    border-top: 1px solid #757575;
    text-align: center;
    font-size: 17.5px;
    color: #4a4a4a;
}

.no-chat p {
    margin: 0;
    line-height: 25px;
    white-space: nowrap;
}

.no-chat .start-chat {
    font-size: 16.6px;
    line-height: 27px;
    margin-left: -12px;
    color: #1e3f8a;
}

.side-tabs {
    height: 40px;
    flex: none;
    display: flex;
    padding-left: 91px;
    background: #868686;
    color: #3e3e3e;
}

.side-tab {
    width: 46px;
    display: flex;
    align-items: center;
    justify-content: center;
}

.side-tab.on {
    background: #7a7a7a;
}

.side-tab:last-child {
    color: #4a4a4a;
}

.gm-list {
    flex: 1;
    display: flex;
    flex-direction: column;
}

.list-bar {
    height: 59px;
    flex: none;
    display: flex;
    justify-content: flex-end;
    align-items: center;
    gap: 26px;
    padding: 5px 41px 0 0;
    border-bottom: 1px solid #767676;
    color: #3c3c3c;
}

.list-scroll {
    flex: 1;
    display: flex;
}

.rows {
    flex: 1;
}

.row {
    position: relative;
    height: 50.3px;
    padding-right: 21px;
    text-align: right;
    background: #7a7c7c;
    border-bottom: 1px solid #6e7070;
    font-size: 15px;
    line-height: 54px;
    letter-spacing: .4px;
    color: #3a3a3a;
}

.row span {
    position: relative;
}

.row.tall {
    height: 100.6px;
}

.row-smear {
    position: absolute;
    left: 20px;
    top: 15px;
    width: 1397px;
    height: 27px;
    background: linear-gradient(90deg, #6e7070 0 6%, #646565 6% 13%, #6e7070 13% 23%, #1f6040 23% 30.5%, #666767 30.5% 100%);
    filter: blur(3.5px);
}

.scrollbar {
    width: 20px;
    padding-left: 6px;
}

.scrollbar i {
    display: block;
    height: 176px;
    background: #6b6b6b;
}

.gm-addons {
    position: relative;
    width: 70px;
    flex: none;
    display: flex;
    flex-direction: column;
    align-items: center;
    border-left: 1px solid #757575;
    color: #3c3c3c;
}

.addon {
    width: 24px;
    height: 24px;
    margin-top: 46px;
    flex: none;
}

.addon:first-child {
    margin-top: 25px;
}

.addon:nth-child(2) {
    margin-top: 45px;
}

.addon-31 {
    font: bold 11px Roboto, sans-serif;
    text-anchor: middle;
    fill: #2d55a6;
}

.addon-line {
    width: 26px;
    height: 1px;
    margin-top: 43px;
    background: #6e6e6e;
}

.addon-plus {
    margin-top: 44px;
}

.addon-next {
    margin-top: auto;
    margin-bottom: 21px;
}

/* compose window */
.compose {
    position: absolute;
    left: 188px;
    top: 50px;
    width: 1545px;
    height: 806px;
    display: flex;
    flex-direction: column;
    background: #fff;
    border-radius: 9px 9px 0 0;
    box-shadow: 0 8px 24px rgba(0, 0, 0, .35);
    font-size: 17.7px;
}

.compose-head {
    height: 50px;
    flex: none;
    display: flex;
    align-items: center;
    padding: 0 18px 0 19.5px;
    background: #404040;
    border-radius: 9px 9px 0 0;
    color: #fff;
    font-size: 18px;
    font-weight: 700;
}

.compose-ctrl {
    margin-left: auto;
    display: flex;
    gap: 16px;
    color: #e8e8e8;
}

.compose-ctrl svg {
    width: 14px;
    height: 14px;
}

.compose-ctrl svg:first-child {
    margin-top: 4px;
}

.compose-ctrl .stroked {
    fill: none;
    stroke: currentColor;
    stroke-width: 2.5;
}

.field {
    height: 45px;
    margin: 0 20px;
    flex: none;
    border-bottom: 1px solid #eceff1;
    line-height: 47px;
    color: #777;
}

.compose-body {
    position: relative;
    flex: 1;
}

.selected {
    position: absolute;
    left: 765px;
    top: 17px;
    width: 14px;
    height: 18px;
    background: #3390ff;
    color: #fff;
    font: 14px/18px "Liberation Sans", sans-serif;
}

.fmt {
    width: 813px;
    height: 45px;
    margin-left: 20px;
    flex: none;
    display: flex;
    align-items: center;
    padding-left: 2px;
    background: #fff;
    border-radius: 2px;
    box-shadow: 0 2px 5px rgba(0, 0, 0, .38), 0 0 1px rgba(0, 0, 0, .15);
    color: #666;
}

.fmt-btn {
    width: 40px;
    height: 40px;
    flex: none;
    display: flex;
    align-items: center;
    justify-content: center;
}

.fmt-sep {
    width: 1px;
    height: 31px;
    flex: none;
    background: #e4e4e4;
}

.fmt-sep.first {
    margin-left: 4px;
}

.fmt-sep.after-size {
    margin-right: 3px;
}

.fmt-font {
    width: 130px;
    flex: none;
    display: flex;
    align-items: center;
    padding-left: 9px;
    color: #444;
}

.fmt-font .caret {
    margin-left: auto;
    margin-right: 11px;
}

.caret {
    border: 4px solid transparent;
    border-top: 5px solid #555;
    border-bottom: 0;
}

.fmt-drop {
    flex: none;
    display: flex;
    align-items: center;
    gap: 6px;
    padding-left: 8px;
}

.fmt-drop.size {
    width: 60px;
    padding-left: 10px;
}

.fmt-drop.color {
    width: 58px;
}

.fmt-drop.align {
    width: 53px;
    margin-left: 4px;
    gap: 4px;
}

.fmt-btn.strike {
    margin: 0 4px 0 1px;
}

.fmt-btn.clear {
    margin-left: 2px;
}

.compose-foot {
    height: 45px;
    margin: 23px 0 17px;
    flex: none;
    display: flex;
    align-items: center;
    padding: 0 16px 0 20px;
    color: #777;
}

.send {
    width: 137px;
    height: 45px;
    flex: none;
    display: flex;
    background: #1a73e8;
    border-radius: 5px;
    color: #fff;
    font-size: 19px;
    font-weight: 700;
}

.send-main {
    width: 107px;
    text-align: center;
    line-height: 46px;
    border-right: 1px solid #1560c4;
}

.send-more {
    flex: 1;
    display: flex;
    align-items: center;
    justify-content: center;
}

.send-more i {
    border: 5px solid transparent;
    border-top: 5px solid #fff;
    border-bottom: 0;
}

.fmt-toggle {
    width: 35px;
    height: 35px;
    margin: 0 3px 0 11px;
    display: flex;
    align-items: center;
    justify-content: center;
    background: #e8e8e8;
    border-radius: 4px;
    color: #222;
}

.foot-btn {
    width: 40px;
    height: 40px;
    flex: none;
    display: flex;
    align-items: center;
    justify-content: center;
}

.foot-btn.right {
    width: 35px;
    margin-left: auto;
}

.foot-btn.end {
    width: 35px;
}

/* context menu */
.ctx {
    position: absolute;
    left: 962px;
    top: 213px;
    width: 396px;
    padding: 6px 1px 4px;
    background: #292a2d;
    box-shadow: 3px 3px 3px rgba(0, 0, 0, .45);
    color: #e8eaed;
    font: 14px var(--ui);
}

.ctx-item {
    position: relative;
    height: 28.8px;
    display: flex;
    align-items: center;
    padding: 0 32px 0 45px;
    white-space: nowrap;
    letter-spacing: .05px;
}

.ctx-item kbd {
    margin-left: auto;
    font: inherit;
    letter-spacing: .25px;
    color: #9aa0a6;
}

.ctx-item.off,
.ctx-item.off kbd {
    color: #74777b;
}

.ctx-item.hover {
    background: #4b4c4f;
}

.ctx-item.hover kbd {
    color: #e8eaed;
}

.ctx-sep {
    height: 14px;
    padding-top: 4px;
}

.ctx-sep::before {
    content: "";
    display: block;
    height: 1px;
    margin: 0 2px;
    background: #3f4043;
}

.ctx-sep.tight {
    height: 13px;
}

.ctx-arrow {
    margin-left: auto;
    margin-right: -21px;
    border: 5px solid transparent;
    border-left: 6px solid #8a8b8d;
    border-right: 0;
}

.ctx-icon {
    position: absolute;
    left: 11px;
    top: 4px;
    width: 19px;
    height: 19px;
}

/* hand pointer */
.hand {
    position: absolute;
    left: 1047px;
    top: 646px;
    width: 83px;
    height: 87px;
}

/* taskbar */
.taskbar {
    height: 50px;
    flex: none;
    display: flex;
    background: #2e3036;
    color: #fff;
}

.task {
    display: flex;
    align-items: center;
    justify-content: center;
    flex: none;
    border-bottom: 3px solid transparent;
}

.task.open {
    border-bottom-color: #5a68c8;
}

.task.win,
.task.find {
    width: 60px;
}

.task.win svg {
    width: 20px;
    height: 20px;
}

.task.find svg {
    width: 22px;
    height: 22px;
    fill: none;
}

.task.sticky {
    width: 52px;
    margin-left: 8px;
}

.task.sticky svg {
    width: 27px;
    height: 27px;
}

.task.folder {
    width: 51px;
    margin-left: 10px;
}

.task.folder svg {
    width: 28px;
    height: 24px;
}

.task.chrome {
    width: 61px;
    margin-left: 6px;
}

.task.chrome svg {
    width: 28px;
    height: 28px;
}

.task.active {
    background: #5a5c62;
}

.task.fork {
    width: 51px;
    margin-left: 6px;
}

.task.fork svg {
    width: 30px;
    height: 30px;
}

.tray {
    margin-left: auto;
    display: flex;
    align-items: stretch;
}

.tray-item {
    display: flex;
    align-items: center;
    justify-content: center;
}

.w28 { width: 28px; }
.w30 { width: 30px; }
.w44 { width: 44px; }
.w56 { width: 56px; }

.tray-chevron {
    width: 16px;
    height: 9px;
    fill: none;
    stroke: #fff;
    stroke-width: 1.3;
}

.tray-battery {
    width: 20px;
    height: 12px;
}

.tray-wifi {
    width: 18px;
    height: 18px;
    fill: none;
}

.tray-vol {
    width: 22px;
    height: 17px;
    fill: none;
}

.tray-kbd {
    width: 30px;
    height: 17px;
}

.tray-note {
    width: 20px;
    height: 20px;
}

.clock {
    width: 86px;
    display: flex;
    flex-direction: column;
    align-items: center;
    justify-content: center;
    gap: 3px;
    font: 14px/20px var(--ui);
}

.show-desktop {
    width: 5px;
    margin-left: 9px;
    border-left: 1px solid #8a8b8e;
}
```
